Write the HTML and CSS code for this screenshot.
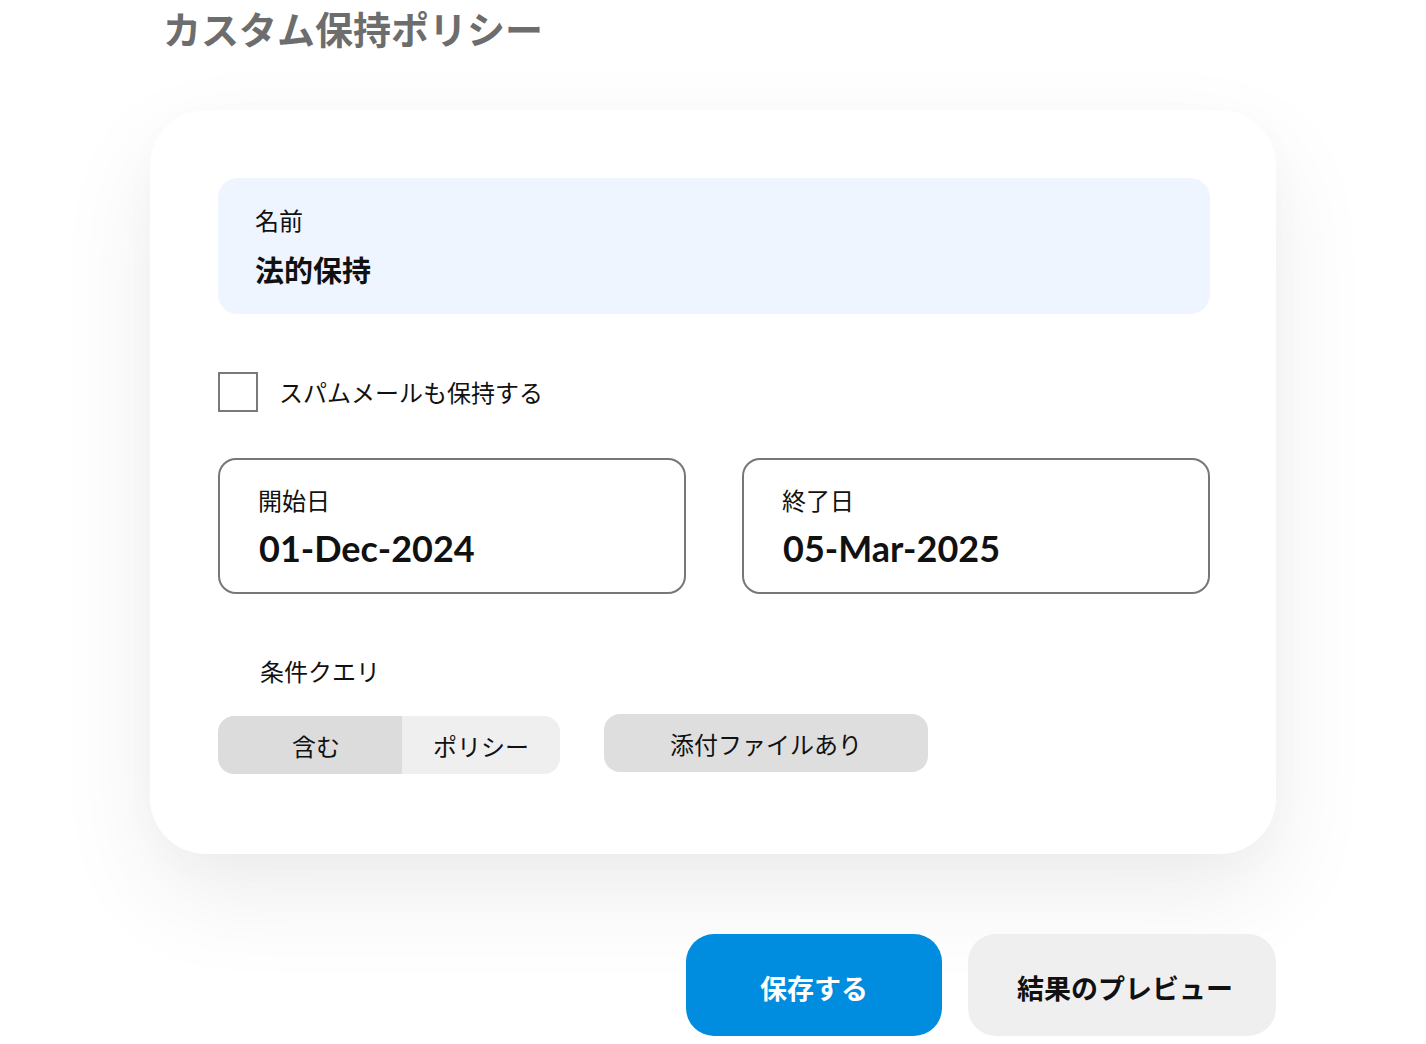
FILE: index.html
```html
<!DOCTYPE html>
<html lang="ja">
<head>
<meta charset="utf-8">
<title>カスタム保持ポリシー</title>
<link rel="stylesheet" href="styles.css">
</head>
<body>
<div class="page">
  <h1 class="title">カスタム保持ポリシー</h1>
  <div class="card">
    <div class="name-field">
      <div class="field-label">名前</div>
      <div class="name-value">法的保持</div>
    </div>
    <label class="check-row">
      <span class="checkbox"></span>
      <span class="check-text">スパムメールも保持する</span>
    </label>
    <div class="dates">
      <div class="date-box">
        <div class="field-label">開始日</div>
        <div class="date-value">01-Dec-2024</div>
      </div>
      <div class="date-box">
        <div class="field-label">終了日</div>
        <div class="date-value">05-Mar-2025</div>
      </div>
    </div>
    <div class="query-label">条件クエリ</div>
    <div class="chips">
      <div class="segment">
        <span class="seg seg-a">含む</span>
        <span class="seg seg-b">ポリシー</span>
      </div>
      <div class="chip">添付ファイルあり</div>
    </div>
  </div>
  <div class="actions">
    <button class="btn btn-primary">保存する</button>
    <button class="btn btn-secondary">結果のプレビュー</button>
  </div>
</div>
</body>
</html>
```
FILE: styles.css
```css
html, body {
  margin: 0;
  padding: 0;
  background: #ffffff;
}
body {
  font-family: "Noto Sans CJK JP", "Noto Sans", sans-serif;
  color: #111;
  width: 1426px;
  height: 1044px;
  overflow: hidden;
}
.page {
  padding-left: 150px;
  width: 1126px;
}
.title {
  margin: 8px 0 0 13px;
  font-size: 38px;
  line-height: 40px;
  font-weight: 700;
  color: #6d6d6d;
  letter-spacing: 0;
}
.card {
  margin-top: 62px;
  height: 744px;
  box-sizing: border-box;
  border-radius: 56px;
  background: #fff;
  box-shadow: 0 40px 100px rgba(0,0,0,0.075), 0 10px 40px rgba(0,0,0,0.02);
  padding: 68px 66px 0 68px;
}
.name-field {
  width: 992px;
  height: 136px;
  box-sizing: border-box;
  background: #eef5fe;
  border-radius: 20px;
  padding: 26px 37px 0;
}
.field-label {
  font-size: 24px;
  line-height: 32px;
  color: #111;
}
.name-value {
  margin-top: 14px;
  font-size: 29px;
  line-height: 38px;
  font-weight: 700;
}
.check-row {
  display: flex;
  align-items: center;
  margin-top: 58px;
  height: 40px;
}
.checkbox {
  width: 40px;
  height: 40px;
  box-sizing: border-box;
  border: 2px solid #7a7a7a;
  background: #fff;
}
.check-text {
  margin-left: 21px;
  font-size: 24px;
  line-height: 40px;
}
.dates {
  display: flex;
  gap: 56px;
  margin-top: 46px;
  width: 992px;
}
.date-box {
  flex: 1;
  height: 136px;
  box-sizing: border-box;
  border: 2px solid #777;
  border-radius: 18px;
  padding: 24px 38px 0;
}
.date-value {
  margin-top: 8px;
  font-family: Lato, "Noto Sans", sans-serif;
  font-weight: 700;
  font-size: 36px;
  line-height: 48px;
  margin-left: 1px;
}
.query-label {
  margin: 60px 0 0 42px;
  font-size: 24px;
  line-height: 34px;
}
.chips {
  display: flex;
  align-items: flex-start;
  gap: 44px;
  margin-top: 26px;
}
.segment {
  display: flex;
  margin-top: 2px;
  height: 58px;
  border-radius: 16px;
  overflow: hidden;
}
.seg {
  display: flex;
  align-items: center;
  justify-content: center;
  font-size: 24px;
}
.seg-a {
  width: 172px;
  padding-left: 12px;
  background: #dcdcdc;
}
.seg-b {
  width: 158px;
  background: #efefef;
}
.chip {
  width: 324px;
  height: 58px;
  border-radius: 16px;
  background: #dedede;
  display: flex;
  align-items: center;
  justify-content: center;
  font-size: 24px;
}
.actions {
  display: flex;
  justify-content: flex-end;
  gap: 26px;
  margin-top: 80px;
}
.btn {
  height: 102px;
  border: none;
  border-radius: 28px;
  font-family: "Noto Sans CJK JP", sans-serif;
  font-weight: 700;
  font-size: 27px;
  padding: 4px 0 0;
}
.btn-primary {
  width: 256px;
  background: #008ddf;
  color: #fff;
}
.btn-secondary {
  width: 308px;
  padding-left: 6px;
  background: #efefef;
  color: #111;
}
```
